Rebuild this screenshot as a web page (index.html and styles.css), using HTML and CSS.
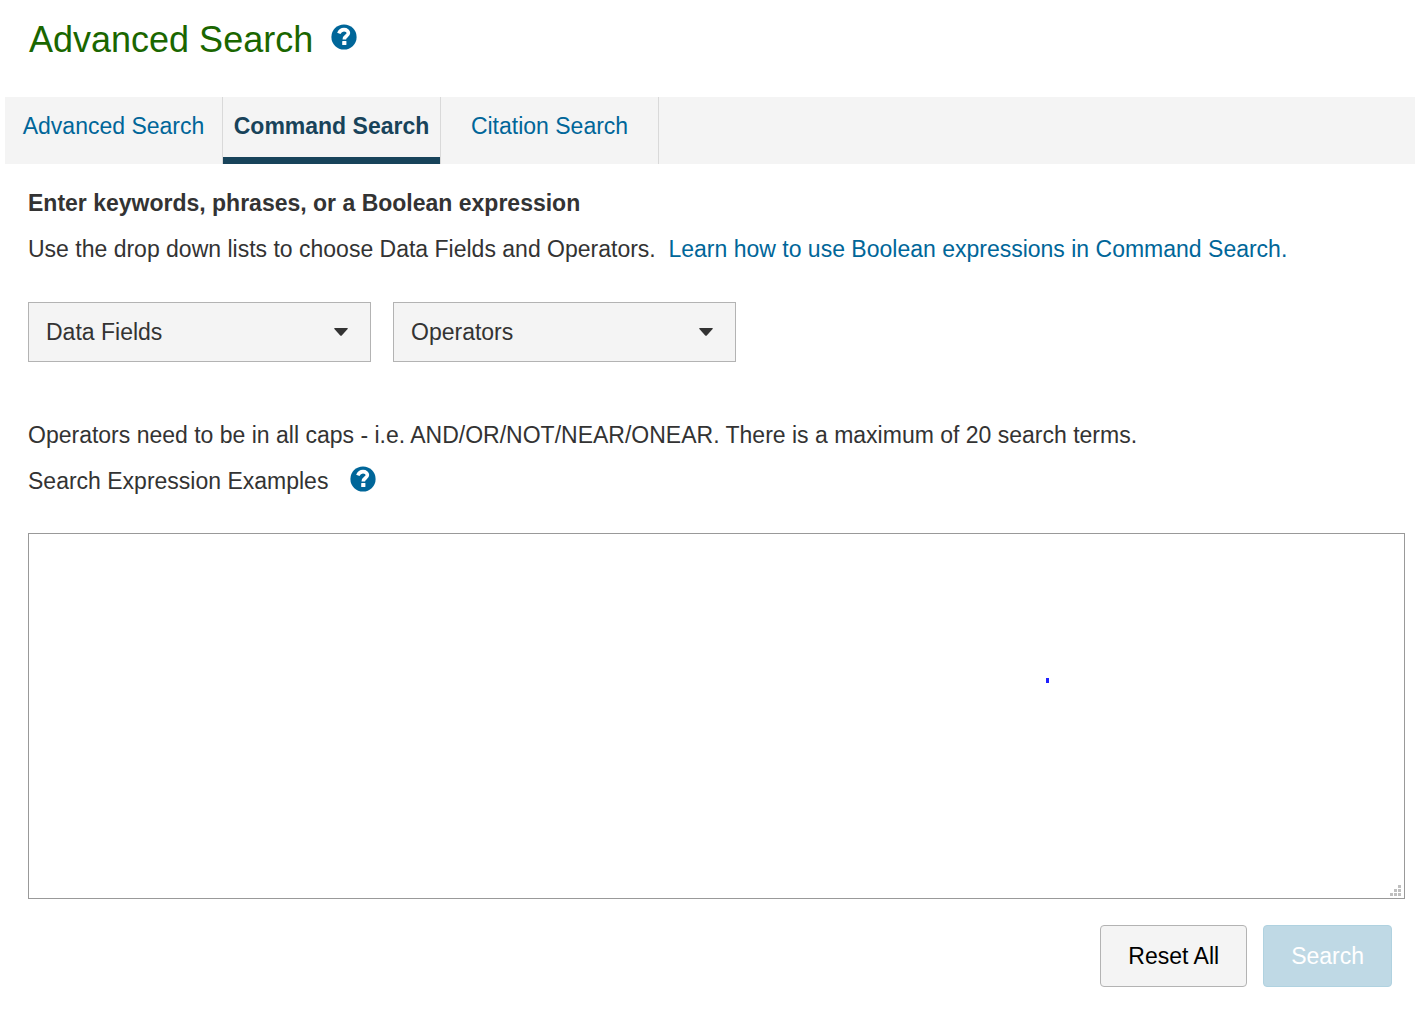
FILE: index.html
```html
<!DOCTYPE html>
<html lang="en">
<head>
    <meta charset="UTF-8">
    <meta name="viewport" content="width=device-width, initial-scale=1.0">
    <title>Advanced Search</title>
    <link rel="stylesheet" href="styles.css">
</head>
<body>
    <header class="page-header">
        <h1>Advanced Search</h1>
        <button type="button" class="help" aria-label="Help">
            <svg viewBox="0 0 26 26" width="26" height="26" aria-hidden="true">
                <circle cx="13" cy="13" r="12.6" fill="#006699"/>
                <path d="M7.8 9.4C8.9 6.8 10.6 5.6 13 5.6c2.6 0 4.4 1.4 4.4 3.5 0 3-4.1 2.9-4.1 6.3" fill="none" stroke="#fff" stroke-width="3.6"/>
                <rect x="11.2" y="17" width="4.2" height="4" rx="0.6" fill="#fff"/>
            </svg>
        </button>
    </header>

    <nav class="tabs">
        <a class="tab" href="#advanced">Advanced Search</a>
        <a class="tab active" href="#command" aria-current="page">Command Search</a>
        <a class="tab" href="#citation">Citation Search</a>
    </nav>

    <main>
        <form class="search-form">
            <h2><label for="expression">Enter keywords, phrases, or a Boolean expression</label></h2>
            <p class="intro">Use the drop down lists to choose Data Fields and Operators.&nbsp; <a href="#help">Learn how to use Boolean expressions in Command Search.</a></p>

            <div class="dropdowns">
                <div class="dropdown">
                    <select aria-label="Data Fields">
                        <option>Data Fields</option>
                    </select>
                    <svg class="arrow" viewBox="0 0 14 8" width="14" height="8" aria-hidden="true">
                        <path d="M0.8 0h12.4q1 0.3 0.4 1L8 7.2q-1 1-2 0L0.4 1q-0.6-0.7 0.4-1z" fill="#333"/>
                    </svg>
                </div>
                <div class="dropdown">
                    <select aria-label="Operators">
                        <option>Operators</option>
                    </select>
                    <svg class="arrow" viewBox="0 0 14 8" width="14" height="8" aria-hidden="true">
                        <path d="M0.8 0h12.4q1 0.3 0.4 1L8 7.2q-1 1-2 0L0.4 1q-0.6-0.7 0.4-1z" fill="#333"/>
                    </svg>
                </div>
            </div>

            <p>Operators need to be in all caps - i.e. AND/OR/NOT/NEAR/ONEAR. There is a maximum of 20 search terms.</p>
            <div class="examples">
                <span>Search Expression Examples</span>
                <button type="button" class="help" aria-label="Search expression examples">
                    <svg viewBox="0 0 26 26" width="26" height="26" aria-hidden="true">
                        <circle cx="13" cy="13" r="12.6" fill="#006699"/>
                        <path d="M7.8 9.4C8.9 6.8 10.6 5.6 13 5.6c2.6 0 4.4 1.4 4.4 3.5 0 3-4.1 2.9-4.1 6.3" fill="none" stroke="#fff" stroke-width="3.6"/>
                        <rect x="11.2" y="17" width="4.2" height="4" rx="0.6" fill="#fff"/>
                    </svg>
                </button>
            </div>

            <div class="editor">
                <textarea id="expression"></textarea>
                <span class="mark"></span>
                <svg class="grip" viewBox="0 0 11 11" width="11" height="11" aria-hidden="true">
                    <path d="M8 0h3v3h-3zM4 4h3v3h-3zM8 4h3v3h-3zM0 8h3v3h-3zM4 8h3v3h-3zM8 8h3v3h-3z" fill="#bfbfbf"/>
                </svg>
            </div>

            <div class="actions">
                <button type="reset" class="btn">Reset All</button>
                <button type="submit" class="btn btn-primary" disabled>Search</button>
            </div>
        </form>
    </main>
</body>
</html>
```
FILE: styles.css
```css
* {
    box-sizing: border-box;
}

body {
    margin: 0;
    font-family: Arial, "Liberation Sans", sans-serif;
    font-size: 23px;
    line-height: 30px;
    color: #333;
    background-color: #fff;
}

a {
    color: #006699;
    text-decoration: none;
}

a:hover {
    text-decoration: underline;
}

h1, h2, p {
    margin: 0;
}

.page-header {
    display: flex;
    align-items: flex-start;
    gap: 18px;
    padding: 20px 29px 37px;
}

.page-header h1 {
    font-size: 36px;
    font-weight: normal;
    line-height: 40px;
    color: #1a6600;
}

.help {
    display: block;
    padding: 0;
    border: 0;
    background: none;
    cursor: pointer;
}

.help svg {
    display: block;
}

.page-header .help {
    margin-top: 4px;
}

/* Tabs */
.tabs {
    display: flex;
    margin-left: 5px;
    background-color: #f4f4f4;
}

.tab {
    width: 218px;
    height: 67px;
    padding-top: 14px;
    border-right: 1px solid #d9d9d9;
    text-align: center;
}

.tab.active {
    font-weight: bold;
    color: #18435a;
    box-shadow: inset 0 -7px #18435a;
}

/* Form */
.search-form {
    padding: 24px 10px 22px 28px;
}

.search-form h2 {
    margin-bottom: 16px;
    font-size: 23px;
    line-height: 30px;
}

.dropdowns {
    display: flex;
    gap: 22px;
    margin: 38px 0 58px;
}

.dropdown {
    position: relative;
    width: 343px;
}

.dropdown select {
    display: block;
    width: 100%;
    height: 60px;
    padding: 0 17px;
    border: 1px solid #b3b3b3;
    border-radius: 0;
    background-color: #f4f4f4;
    font: inherit;
    color: #333;
    appearance: none;
}

.arrow {
    position: absolute;
    top: 26px;
    right: 23px;
    pointer-events: none;
}

.examples {
    display: flex;
    align-items: flex-start;
    gap: 22px;
    margin-top: 16px;
}

.editor {
    position: relative;
    margin-top: 37px;
}

.editor textarea {
    display: block;
    width: 100%;
    height: 366px;
    padding: 12px;
    border: 1px solid #999;
    border-radius: 0;
    font: inherit;
    resize: none;
}

.mark {
    position: absolute;
    top: 145px;
    right: 356px;
    width: 3px;
    height: 5px;
    background-color: #2020ff;
}

.grip {
    position: absolute;
    right: 4px;
    bottom: 3px;
}

.actions {
    display: flex;
    justify-content: flex-end;
    gap: 16px;
    margin: 26px 13px 0 0;
}

.btn {
    height: 62px;
    padding: 0 27px;
    border: 1px solid #b3b3b3;
    border-radius: 4px;
    background-color: #f4f4f4;
    font: inherit;
    color: #000;
}

.btn-primary {
    border-color: #b0d2e0;
    background-color: #bfd9e5;
    color: #fff;
}
```
